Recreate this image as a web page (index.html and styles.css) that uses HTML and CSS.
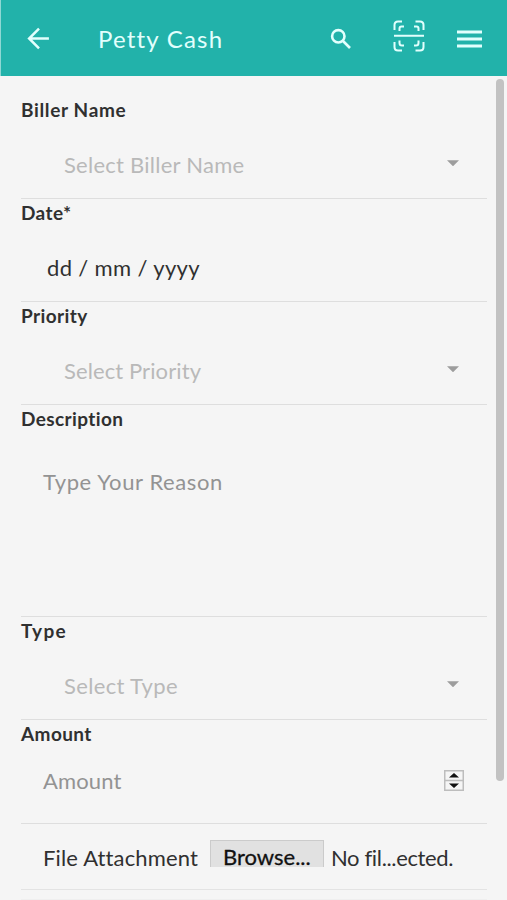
FILE: index.html
```html
<!DOCTYPE html>
<html lang="en">
<head>
<meta charset="utf-8">
<title>Petty Cash</title>
<link rel="stylesheet" href="styles.css">
</head>
<body>
<header class="bar">
  <svg class="back" viewBox="0 0 24 24"><path d="M22 12H3M12.500 2.500L3 12l9.500 9.500"/></svg>
  <h1 class="title">Petty Cash</h1>
  <svg class="search" viewBox="0 0 22 22"><circle cx="8.300" cy="8.300" r="6.200"/><path d="M13 13l7 7"/></svg>
  <svg class="scan" viewBox="0 0 32 32"><path d="M1.500 10V5q0-3.500 3.500-3.500h4M22.500 1.500H27q3.500 0 3.500 3.500v5M1.500 22v5q0 3.500 3.500 3.500h4M22.500 30.500H27q3.500 0 3.500-3.500v-5M6.500 11V8.500Q6.500 6.500 8.500 6.500H11M21 6.500h2.500q2 0 2 2V11M6.500 20.500V23q0 2.500 2.500 2.500h2M21 25.500h2q2.500 0 2.500-2.500v-2.500M1 15.800h30"/></svg>
  <svg class="menu" viewBox="0 0 25 18"><path d="M0 2h25M0 9h25M0 16h25"/></svg>
</header>
<main class="page">
  <form class="form">
    <section class="field first">
      <label class="label t-biller">Biller Name</label>
      <div class="control select"><span class="hint p-biller">Select Biller Name</span><i class="caret"></i></div>
    </section>
    <section class="field">
      <label class="label t-date">Date*</label>
      <div class="control date"><span class="value p-date">dd / mm / yyyy</span></div>
    </section>
    <section class="field">
      <label class="label t-priority">Priority</label>
      <div class="control select"><span class="hint p-priority">Select Priority</span><i class="caret"></i></div>
    </section>
    <section class="field tall">
      <label class="label t-desc">Description</label>
      <div class="control"><span class="placeholder p-reason">Type Your Reason</span></div>
    </section>
    <section class="field">
      <label class="label t-type">Type</label>
      <div class="control select"><span class="hint p-type">Select Type</span><i class="caret"></i></div>
    </section>
    <section class="field amount">
      <label class="label t-amount">Amount</label>
      <div class="control"><span class="placeholder p-amount">Amount</span>
        <svg class="spinner" viewBox="0 0 20 21"><path class="box" d="M.75.75h18.500v19.500H.75zM.75 10.500h18.500"/><path class="arrow" d="M5 7.500l5-4.500 5 4.500zM5 13.500l5 4.500 5-4.500z"/></svg>
      </div>
    </section>
    <section class="file">
      <span class="value p-file">File Attachment</span>
      <span class="browse">Browse...</span>
      <span class="value p-none">No fil...ected.</span>
    </section>
    <div class="next"></div>
  </form>
  <div class="scroll"><div class="thumb"></div></div>
</main>
</body>
</html>
```
FILE: styles.css
```css
* { box-sizing: border-box; }
body { margin: 0; height: 900px; overflow: hidden; background: #f5f5f5; color: #303030; font-family: Lato, "Liberation Sans", sans-serif; font-variant-ligatures: none; }
svg { fill: none; stroke: #e2fffd; flex: none; }
.bar { height: 76px; display: flex; align-items: center; background: #22b2aa; border-left: 1px solid #8fd8d4; }
.back { width: 25px; height: 25px; margin-left: 25px; stroke-width: 2.4; }
.title { margin: 2px 0 0 47px; width: 232px; font-size: 24px; line-height: 30px; font-weight: 400; letter-spacing: 1.2px; color: #e2fffd; white-space: nowrap; }
.search { width: 22px; height: 22px; stroke-width: 2.6; margin-top: 1px; }
.scan { width: 32px; height: 32px; margin: -4px 0 0 41px; stroke-width: 2; }
.menu { width: 25px; height: 18px; margin-left: 32px; margin-top: 1px; stroke-width: 2.8; }
.page { display: flex; height: 824px; }
.form { flex: none; width: 466px; margin-left: 21px; }
.field { height: 103px; border-bottom: 1.5px solid #dedede; display: flex; flex-direction: column; }
.first { height: 123px; padding-top: 20px; }
.tall { height: 212px; }
.amount { height: 104px; }
.label { font-size: 19px; height: 28px; line-height: 27px; font-weight: 700; letter-spacing: .4px; white-space: nowrap; }
.t-biller { letter-spacing: .65px; }
.t-type { letter-spacing: 1.3px; }
.control { height: 75px; display: flex; align-items: center; justify-content: space-between; padding: 2px 23px 3px 22px; font-size: 22px; line-height: 28px; white-space: nowrap; }
.tall .control { height: 98px; }
.amount .control { height: 66px; }
.control.select { padding: 9px 28px 0 43px; }
.control.date { padding: 9px 0 0 26px; }
.hint { color: #b9b9b9; }
.placeholder { color: #939393; }
.p-biller { letter-spacing: .25px; }
.p-date { letter-spacing: .35px; }
.p-priority { letter-spacing: .1px; }
.p-reason { letter-spacing: .6px; }
.p-type { letter-spacing: .35px; }
.p-amount { letter-spacing: .15px; }
.caret { width: 12px; height: 6px; background: #9d9d9d; clip-path: polygon(0 0, 100% 0, 50% 100%); margin-bottom: 4px; }
.spinner { width: 20px; height: 21px; }
.spinner .box { stroke: #bdbdbd; stroke-width: 1.5; }
.spinner .arrow { fill: #111; stroke: none; }
.file { height: 66px; border-bottom: 1.5px solid #e3e3e3; padding: 16px 0 0 22px; display: flex; align-items: flex-start; font-size: 22px; line-height: 35px; white-space: nowrap; }
.p-file { width: 167px; letter-spacing: .15px; }
.p-none { letter-spacing: -.35px; }
.browse { width: 114px; height: 27px; background: #e1e1e1; border: 1.5px solid #cbcbcb; border-bottom: 0; padding-left: 12px; color: #111; margin-right: 7px; line-height: 32px; -webkit-text-stroke: .3px #111; }
.next { height: 10px; border-bottom: 1px solid #efefef; }
.scroll { width: 12px; margin-left: 9px; padding-top: 3px; }
.thumb { width: 8px; height: 702px; border-radius: 4px; background: #c2c2c2; }
```
